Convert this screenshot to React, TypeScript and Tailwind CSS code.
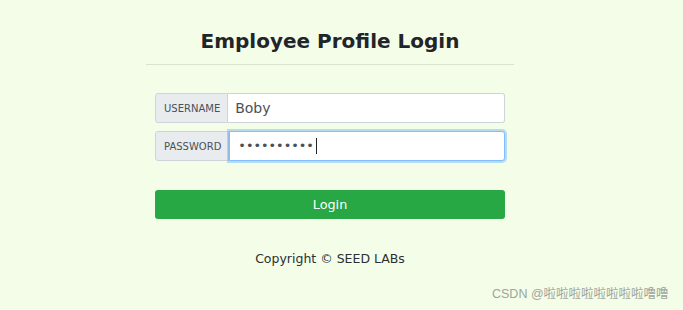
import React from 'react';

const font = { fontFamily: '"DejaVu Sans", sans-serif' };

interface FieldProps {
  label: string;
  focused?: boolean;
  children: React.ReactNode;
}

const Field: React.FC<FieldProps> = ({ label, focused, children }) => {
  return (
    <div className="flex h-[30px] w-full">
      <div className="flex items-center rounded-l-[3px] border border-[#ced4da] bg-[#e9ecef] pl-[8px] pr-[7px] text-[10px] text-[#495057]">
        {label}
      </div>
      <div
        className={
          focused
            ? 'flex flex-1 items-center rounded-r-[3px] border border-[#80bdff] bg-white pl-[8px] text-[12.8px] text-[#495057] shadow-[0_0_0_2px_rgba(0,123,255,0.25)]'
            : 'flex flex-1 items-center rounded-r-[3px] border border-l-0 border-[#ced4da] bg-white pl-[7px] text-[14px] text-[#495057]'
        }
      >
        {children}
      </div>
    </div>
  );
};

const App: React.FC = () => {
  return (
    <div className="relative min-h-[310px] w-full bg-[#f3fde8]" style={font}>
      <div className="ml-[146px] w-[368px] pt-[29px]">
        <h1 className="text-center text-[20px] font-bold leading-[24px] text-[#212529]">Employee Profile Login</h1>
        <hr className="mt-[11px] border-0 border-t border-black/10" />

        <div className="mt-[28px] flex flex-col gap-[8px] px-[9px]">
          <Field label="USERNAME">Boby</Field>
          <Field label="PASSWORD" focused>
            <span>••••••••••</span>
            <span className="ml-[2px] inline-block h-[16px] w-[1px] bg-[#212529]" />
          </Field>

          <button className="mt-[21px] h-[29px] w-full rounded-[3px] bg-[#28a745] text-[12.8px] text-white">
            Login
          </button>
        </div>

        <p className="mt-[32px] text-center text-[12.5px] leading-[15px] text-[#2b2f33]">Copyright © SEED LABs</p>
      </div>

      <div
        className="absolute left-[492px] top-[285px] text-[12.5px] text-[#a0a59c]"
        style={{ fontFamily: '"Liberation Sans", "Noto Sans CJK SC", sans-serif' }}
      >
        CSDN @啦啦啦啦啦啦啦啦噜噜
      </div>
    </div>
  );
};

export default App;
